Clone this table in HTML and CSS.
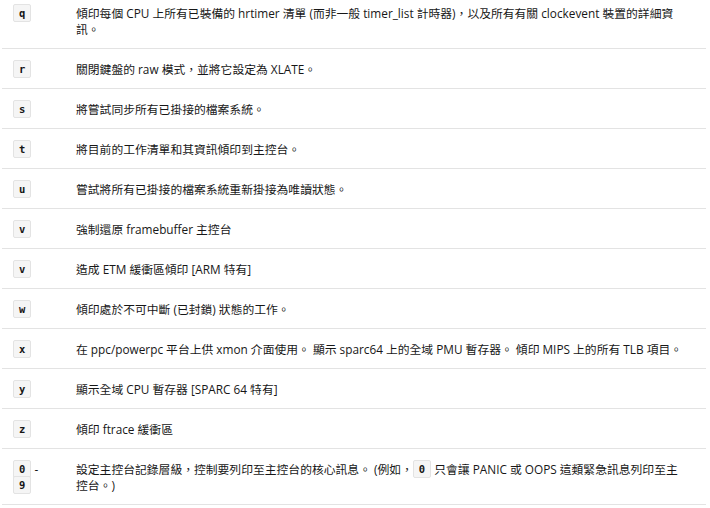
FILE: index.html
```html
<!DOCTYPE html>
<html lang="zh-Hant">
<head>
<meta charset="utf-8">
<link rel="stylesheet" href="styles.css">
</head>
<body>
<table class="keys">
<tbody>
<tr><td class="k"><code>q</code></td><td class="d">傾印每個 CPU 上所有已裝備的 hrtimer 清單 (而非一般 timer_list 計時器)，以及所有有關 clockevent 裝置的詳細資訊。</td></tr>
<tr><td class="k"><code>r</code></td><td class="d">關閉鍵盤的 raw 模式，並將它設定為 XLATE。</td></tr>
<tr><td class="k"><code>s</code></td><td class="d">將嘗試同步所有已掛接的檔案系統。</td></tr>
<tr><td class="k"><code>t</code></td><td class="d">將目前的工作清單和其資訊傾印到主控台。</td></tr>
<tr><td class="k"><code>u</code></td><td class="d">嘗試將所有已掛接的檔案系統重新掛接為唯讀狀態。</td></tr>
<tr><td class="k"><code>v</code></td><td class="d">強制還原 framebuffer 主控台</td></tr>
<tr><td class="k"><code>v</code></td><td class="d">造成 ETM 緩衝區傾印 [ARM 特有]</td></tr>
<tr><td class="k"><code>w</code></td><td class="d">傾印處於不可中斷 (已封鎖) 狀態的工作。</td></tr>
<tr><td class="k"><code>x</code></td><td class="d">在 ppc/powerpc 平台上供 xmon 介面使用。 顯示 sparc64 上的全域 PMU 暫存器。 傾印 MIPS 上的所有 TLB 項目。</td></tr>
<tr><td class="k"><code>y</code></td><td class="d">顯示全域 CPU 暫存器 [SPARC 64 特有]</td></tr>
<tr><td class="k"><code>z</code></td><td class="d">傾印 ftrace 緩衝區</td></tr>
<tr><td class="k"><code>0</code> - <code>9</code></td><td class="d">設定主控台記錄層級，控制要列印至主控台的核心訊息。 (例如，<code>0</code> 只會讓 PANIC 或 OOPS 這類緊急訊息列印至主控台。)</td></tr>
</tbody>
</table>
</body>
</html>
```

FILE: styles.css
```css
html, body {
  margin: 0;
  padding: 0;
  background: #ffffff;
}
body {
  font-family: "Open Sans", "Noto Sans CJK TC", sans-serif;
  font-size: 11.8px;
  line-height: 16px;
  color: #171717;
}
.keys {
  border-collapse: collapse;
  margin: -7px 0 0 2px;
  width: 704px;
}
.keys td {
  vertical-align: top;
  padding: 12px 12px 11px 11px;
  border-bottom: 1px solid #e3e3e3;
}
.keys td.k {
  width: 40px;
}
.keys td.d {
  padding-left: 11px;
  padding-right: 19px;
}
code {
  font-family: "DejaVu Sans Mono", monospace;
  font-size: 10.5px;
  font-weight: bold;
  line-height: 16px;
  display: inline-block;
  vertical-align: top;
  margin: -1px 0;
  padding: 0 5px;
  background: #f5f5f5;
  border: 1px solid #e3e3e3;
  border-radius: 2px;
  color: #161616;
}
```
